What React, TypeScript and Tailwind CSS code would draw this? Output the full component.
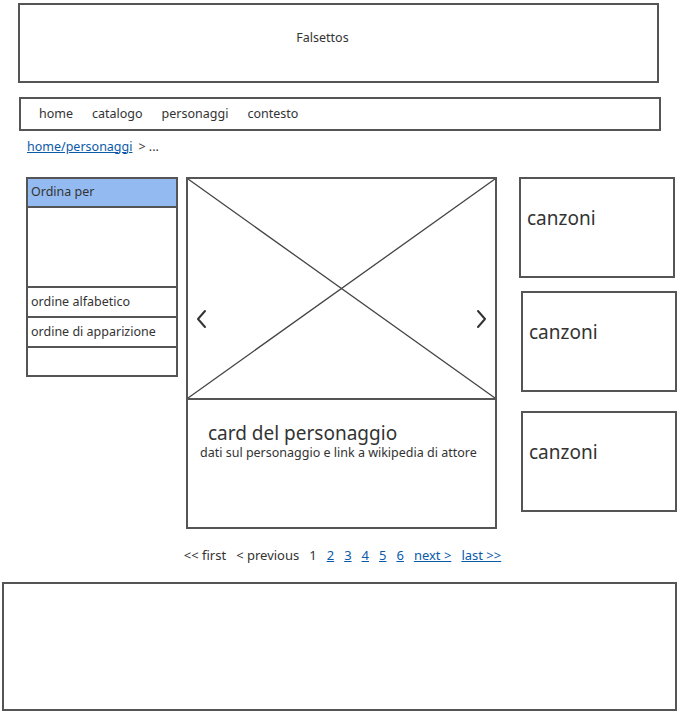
import React from "react";

const font = { fontFamily: '"Noto Sans", "Open Sans", sans-serif' };

function Chevron({ dir }: { dir: "left" | "right" }) {
  return (
    <svg width="12" height="20" viewBox="0 0 12 20" fill="none">
      {dir === "left" ? (
        <path d="M9 2 L2 10 L9 18" stroke="#333" strokeWidth="2" strokeLinecap="round" strokeLinejoin="round" />
      ) : (
        <path d="M3 2 L10 10 L3 18" stroke="#333" strokeWidth="2" strokeLinecap="round" strokeLinejoin="round" />
      )}
    </svg>
  );
}

function SongBox({ className }: { className: string }) {
  return (
    <div className={`border-2 border-[#555] h-[101px] w-[156px] pl-[6px] pt-[28px] ${className}`}>
      <span className="text-[19px] text-[#333] leading-none">canzoni</span>
    </div>
  );
}

export default function App() {
  return (
    <div className="w-[679px] h-[714px] bg-white text-[#333] flex flex-col" style={font}>
      <div className="mt-[3px] ml-[18px] w-[641px] h-[80px] border-2 border-[#555] flex justify-center pt-[24px] text-[12.5px]">
        <span className="pr-[32px]">Falsettos</span>
      </div>
      <div className="mt-[14px] ml-[19px] w-[642px] h-[34px] border-2 border-[#555] flex items-center gap-[19px] pl-[18px] text-[12.5px]">
        <span>home</span>
        <span>catalogo</span>
        <span>personaggi</span>
        <span>contesto</span>
      </div>
      <div className="mt-[7px] ml-[27px] text-[12.5px] flex items-center gap-[6px] h-[18px]">
        <span className="text-[#0b5aa8] underline">home/personaggi</span>
        <span>&gt; ...</span>
      </div>
      <div className="mt-[21px] flex items-start">
        <div className="ml-[26px] w-[152px] border-2 border-[#555] flex flex-col text-[12.5px]">
          <div className="h-[29px] bg-[#94bbf1] border-b-2 border-[#555] flex items-center pl-[3px]">Ordina per</div>
          <div className="h-[80px] border-b-2 border-[#555]"></div>
          <div className="h-[30px] border-b-2 border-[#555] flex items-center pl-[3px]">ordine alfabetico</div>
          <div className="h-[30px] border-b-2 border-[#555] flex items-center pl-[3px]">ordine di apparizione</div>
          <div className="h-[27px]"></div>
        </div>
        <div className="ml-[8px] w-[311px] flex flex-col">
          <div className="relative h-[223px] border-2 border-[#555] flex items-start justify-between px-[8px] pt-[130px]">
            <svg className="absolute inset-0" width="307" height="219" viewBox="0 0 307 219" preserveAspectRatio="none">
              <line x1="0" y1="0" x2="307" y2="219" stroke="#444" strokeWidth="1.3" />
              <line x1="307" y1="0" x2="0" y2="219" stroke="#444" strokeWidth="1.3" />
            </svg>
            <span className="relative"><Chevron dir="left" /></span>
            <span className="relative"><Chevron dir="right" /></span>
          </div>
          <div className="h-[129px] border-2 border-t-0 border-[#555] flex flex-col pt-[21px]">
            <div className="pl-[20px] text-[19px] leading-[24px]">card del personaggio</div>
            <div className="pl-[12px] text-[12.5px] leading-[16px]">dati sul personaggio e link a wikipedia di attore</div>
          </div>
        </div>
        <div className="ml-[22px] flex flex-col">
          <SongBox className="" />
          <SongBox className="mt-[13px] ml-[2px]" />
          <SongBox className="mt-[19px] ml-[2px]" />
        </div>
      </div>
      <div className="mt-[17px] flex justify-center gap-[10px] text-[13px] pl-[6px]">
        <span>&lt;&lt; first</span>
        <span>&lt; previous</span>
        <span>1</span>
        <span className="text-[#0b5aa8] underline">2</span>
        <span className="text-[#0b5aa8] underline">3</span>
        <span className="text-[#0b5aa8] underline">4</span>
        <span className="text-[#0b5aa8] underline">5</span>
        <span className="text-[#0b5aa8] underline">6</span>
        <span className="text-[#0b5aa8] underline">next &gt;</span>
        <span className="text-[#0b5aa8] underline">last &gt;&gt;</span>
      </div>
      <div className="mt-[16px] ml-[2px] w-[675px] h-[129px] border-2 border-[#555]"></div>
    </div>
  );
}
